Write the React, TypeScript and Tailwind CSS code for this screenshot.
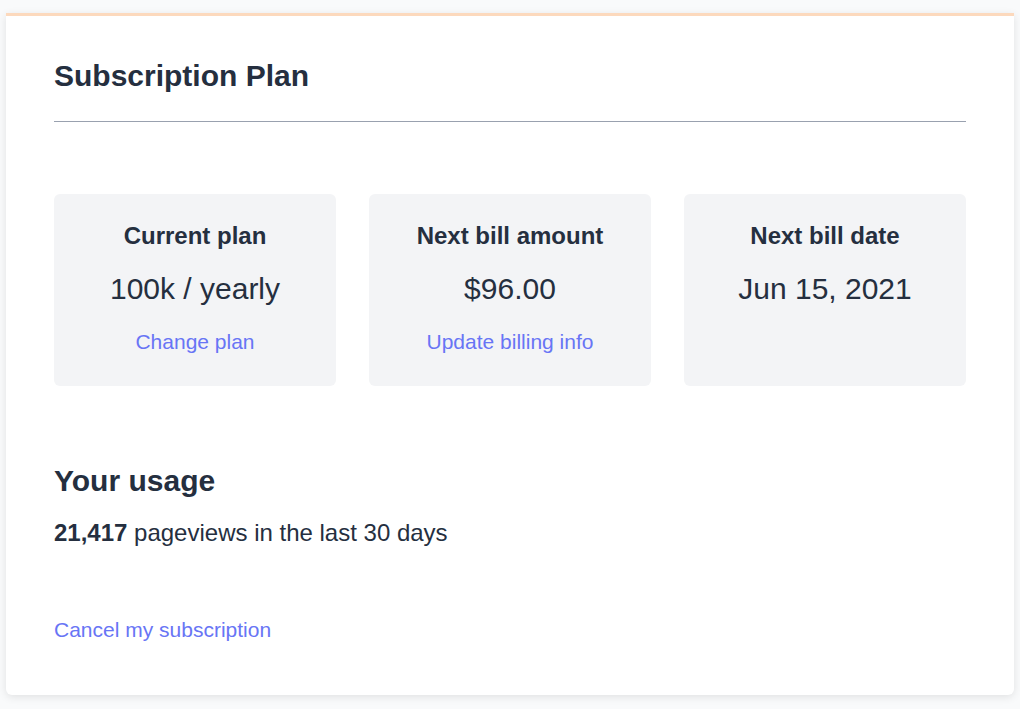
import React from "react";

const font = { fontFamily: '"Liberation Sans", Arial, sans-serif' };

function StatCard({ label, value, link }: { label: string; value: string; link?: string }) {
  return (
    <div className="bg-gray-100 rounded-md pt-[26px] pb-[30px] flex flex-col items-center text-center">
      <div className="text-2xl font-bold text-[#252f3f]">{label}</div>
      <div className="text-3xl text-[#252f3f] mt-[19px]">{value}</div>
      {link && <a className="text-[21px] leading-[28px] text-[#6875f5] mt-[21px]">{link}</a>}
    </div>
  );
}

export default function App() {
  return (
    <div className="min-h-[709px] bg-gray-50 pt-[13px] px-[6px]" style={font}>
      <div className="bg-white border-t-[3px] border-[#fcd9bd] rounded-b-md shadow-[0_2px_8px_rgba(0,0,0,0.1)] px-12 pt-[42px] pb-[51px]">
        <h1 className="text-3xl font-bold text-[#252f3f]">Subscription Plan</h1>
        <div className="h-px bg-gray-400 mt-[27px]" />
        <div className="grid grid-cols-3 gap-[33px] mt-[72px]">
          <StatCard label="Current plan" value="100k / yearly" link="Change plan" />
          <StatCard label="Next bill amount" value="$96.00" link="Update billing info" />
          <StatCard label="Next bill date" value="Jun 15, 2021" />
        </div>
        <h2 className="text-3xl font-bold text-[#252f3f] mt-[77px]">Your usage</h2>
        <p className="text-2xl text-[#252f3f] mt-[18px]">
          <span className="font-bold">21,417</span> pageviews in the last 30 days
        </p>
        <a className="block text-[21px] leading-[28px] text-[#6875f5] mt-[67px]">Cancel my subscription</a>
      </div>
    </div>
  );
}
